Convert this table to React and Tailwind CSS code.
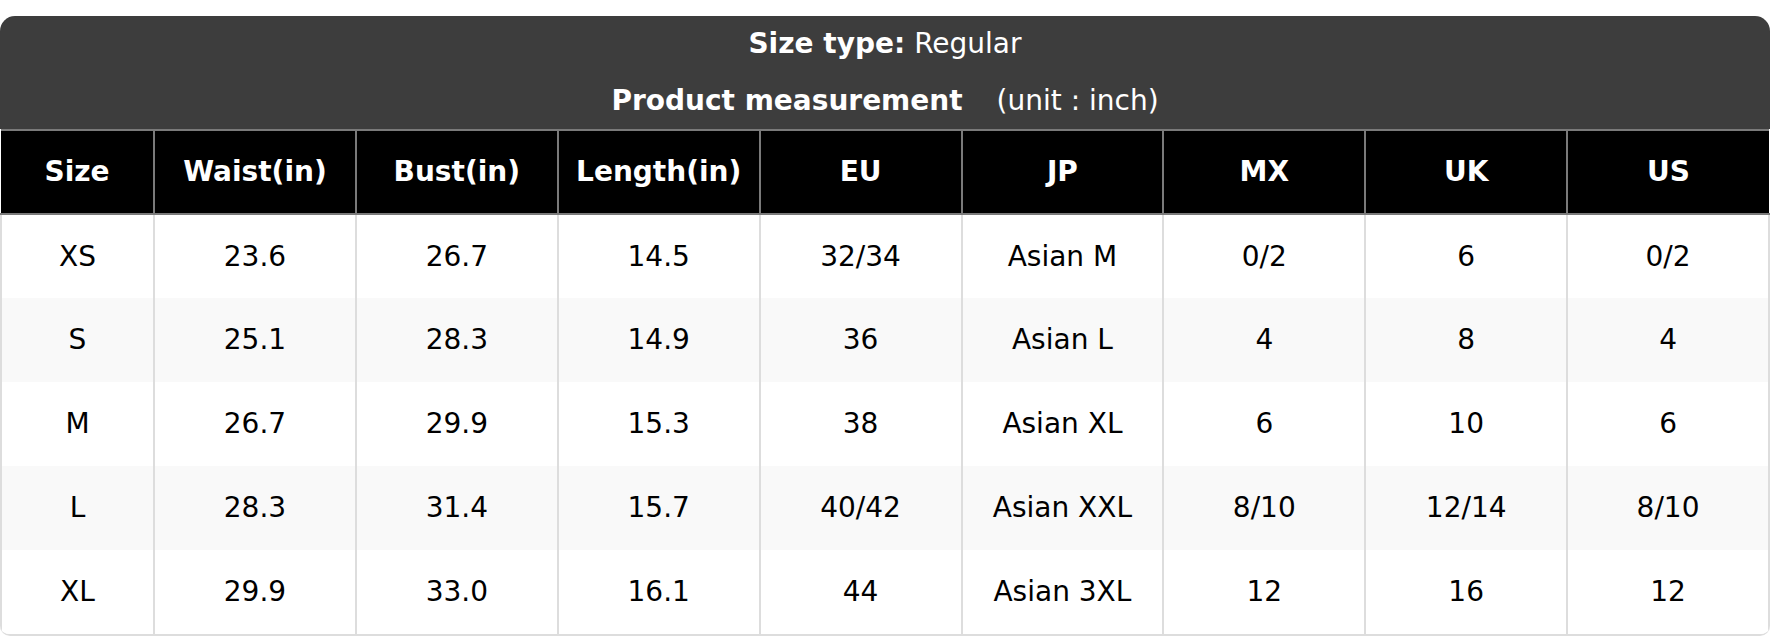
import React from 'react'

const columns = ['Size', 'Waist(in)', 'Bust(in)', 'Length(in)', 'EU', 'JP', 'MX', 'UK', 'US']

const rows = [
  ['XS', '23.6', '26.7', '14.5', '32/34', 'Asian M', '0/2', '6', '0/2'],
  ['S', '25.1', '28.3', '14.9', '36', 'Asian L', '4', '8', '4'],
  ['M', '26.7', '29.9', '15.3', '38', 'Asian XL', '6', '10', '6'],
  ['L', '28.3', '31.4', '15.7', '40/42', 'Asian XXL', '8/10', '12/14', '8/10'],
  ['XL', '29.9', '33.0', '16.1', '44', 'Asian 3XL', '12', '16', '12']
]

const SizeChart = () => {
  return (
    <div className="pt-4 bg-white" style={{ fontFamily: '"DejaVu Sans", Verdana, sans-serif' }}>
      <div className="overflow-hidden rounded-t-[15px] rounded-b-[10px] border-b-2 border-[#dddddd]">
        <div className="bg-[#3d3d3d] text-white text-[28px]">
          <div className="h-[56px] flex items-center justify-center">
            <span className="font-bold">Size type:</span>
            <span className="ml-[9px]">Regular</span>
          </div>
          <div className="h-[57px] flex items-center justify-center">
            <span className="font-bold">Product measurement</span>
            <span className="ml-[34px]">(unit : inch)</span>
          </div>
        </div>
        <table className="w-full table-fixed border-collapse text-[28px]">
          <colgroup>
            <col className="w-[153px]" />
            {columns.slice(1).map(c => (
              <col key={c} />
            ))}
          </colgroup>
          <thead>
            <tr className="bg-black text-white">
              {columns.map(c => (
                <th
                  key={c}
                  className="h-[84px] border-2 border-[#7a7a7a] font-bold text-center first:border-l-0 last:border-r-0 p-0"
                >
                  {c}
                </th>
              ))}
            </tr>
          </thead>
          <tbody>
            {rows.map((row, i) => (
              <tr key={row[0]} className={i % 2 === 1 ? 'bg-[#f9f9f9]' : 'bg-white'}>
                {row.map((cell, j) => (
                  <td
                    key={j}
                    className="h-[84px] border-x-2 border-[#dddddd] text-center text-black p-0"
                  >
                    {cell}
                  </td>
                ))}
              </tr>
            ))}
          </tbody>
        </table>
      </div>
    </div>
  )
}

export default function App() {
  return <SizeChart />
}
